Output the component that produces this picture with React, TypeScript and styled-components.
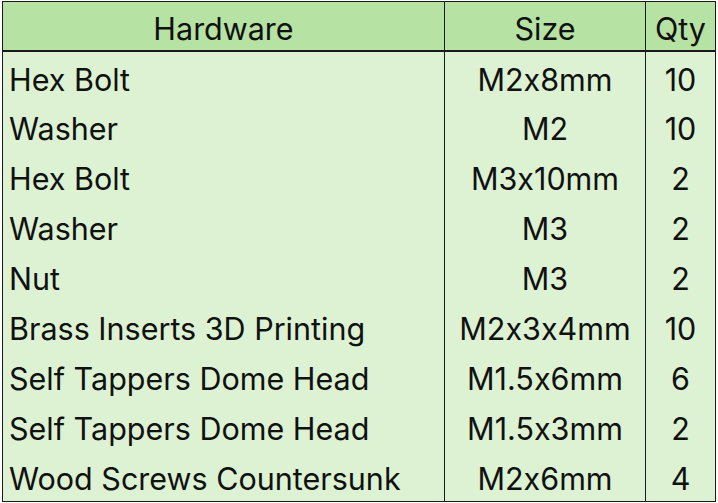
import React from "react";
import styled, {createGlobalStyle} from "styled-components";

const GlobalStyle = createGlobalStyle`
  html, body {
    margin: 0;
    padding: 0;
    background: #ffffff;
  }
  body {
    font-family: Inter, "Liberation Sans", sans-serif;
    font-feature-settings: "calt" 0;
    color: #111;
  }
`;

const Page = styled.div`
  padding: 1px 0 0 2px;
`;

const Sheet = styled.div`
  display: grid;
  grid-template-columns: 442px 201px 69px;
  grid-template-rows: 50px repeat(9, 1fr);
  width: 714px;
  height: 501px;
  box-sizing: border-box;
  border: 1px solid #1a1a1a;
  font-size: 30.5px;
  line-height: normal;
`;

const HeadCell = styled.div<{ $last?: boolean }>`
  display: flex;
  align-items: center;
  justify-content: center;
  box-sizing: border-box;
  padding-top: 4px;
  background: #b6e2a3;
  border-bottom: 2px solid #1a1a1a;
  border-right: ${p => (p.$last ? "none" : "1px solid #1a1a1a")};
  white-space: nowrap;
`;

const Cell = styled.div<{ $left?: boolean; $last?: boolean }>`
  display: flex;
  align-items: flex-start;
  justify-content: ${p => (p.$left ? "flex-start" : "center")};
  box-sizing: border-box;
  padding: ${p => (p.$left ? "8.5px 0 0 6px" : "8.5px 0 0 0")};
  background: #dcf2d3;
  border-right: ${p => (p.$last ? "none" : "1px solid #1a1a1a")};
  white-space: nowrap;
  min-height: 0;
`;

const rows: [string, string, number][] = [
    ["Hex Bolt", "M2x8mm", 10],
    ["Washer", "M2", 10],
    ["Hex Bolt", "M3x10mm", 2],
    ["Washer", "M3", 2],
    ["Nut", "M3", 2],
    ["Brass Inserts 3D Printing", "M2x3x4mm", 10],
    ["Self Tappers Dome Head", "M1.5x6mm", 6],
    ["Self Tappers Dome Head", "M1.5x3mm", 2],
    ["Wood Screws Countersunk", "M2x6mm", 4],
];

const App: React.FC = () => {
    return (
        <Page>
            <GlobalStyle/>
            <Sheet>
                <HeadCell>Hardware</HeadCell>
                <HeadCell>Size</HeadCell>
                <HeadCell $last>Qty</HeadCell>
                {rows.map(([name, size, qty], i) => (
                    <React.Fragment key={i}>
                        <Cell $left>{name}</Cell>
                        <Cell>{size}</Cell>
                        <Cell $last>{qty}</Cell>
                    </React.Fragment>
                ))}
            </Sheet>
        </Page>
    );
};

export default App;
